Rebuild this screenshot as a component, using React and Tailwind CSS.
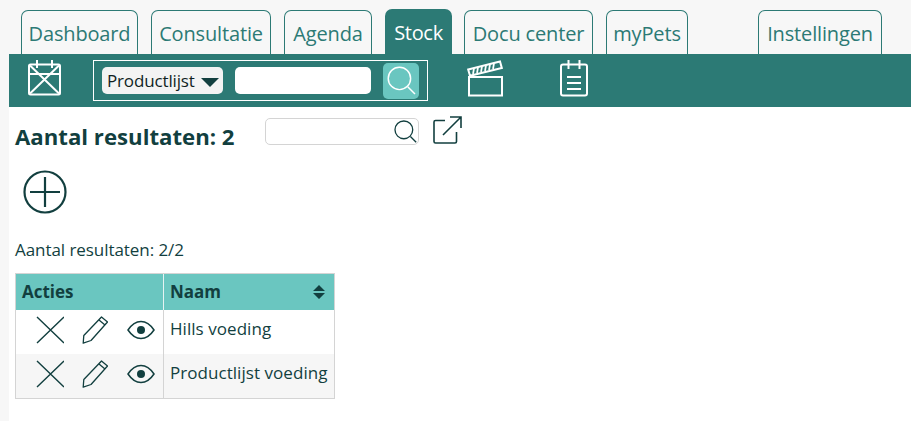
const FONT = "font-['Open_Sans','Noto_Sans',sans-serif]";

function Tab({ label, w, active, ml = "ml-[13px]" }) {
  if (active) {
    return (
      <div className={`${ml} ${w} h-[45px] rounded-t-[7px] bg-[#2c7a75] text-white text-[20px] tracking-[-0.3px] font-medium flex items-center justify-center pt-[3px]`}>
        {label}
      </div>
    );
  }
  return (
    <div className={`${ml} ${w} h-[44px] rounded-t-[7px] border border-b-0 border-[#2c7a75] text-[#2c7a75] text-[20px] tracking-[-0.15px] flex items-center justify-center pt-[2px]`}>
      {label}
    </div>
  );
}

const W = "#ffffff";
const D = "#123f3f";

function CalIcon() {
  return (
    <svg width="34" height="37" viewBox="0 0 34 37" fill="none" stroke={W} strokeWidth="2">
      <rect x="1" y="4.5" width="31" height="30" rx="1.5" />
      <path d="M9 0v8M24 0v8M1 14h31M2 5.5l29 28M31 5.5l-29 28" />
    </svg>
  );
}
function ClapIcon() {
  return (
    <svg width="36" height="37" viewBox="0 0 36 37" fill="none" stroke={W} strokeWidth="2">
      <rect x="2" y="17" width="33" height="18.5" />
      <path d="M1.2 9.5 33 1.5l1.8 6.5L3 15.8z" />
      <path d="M7 8.5l-1 5.5M11 7.5l-1 5.5M15 6.5l-1 5.5M19 5.5l-1 5.5M23 4.5l-1 5.5M27 3.5l-1 5.5" strokeWidth="1.7" />
    </svg>
  );
}
function NoteIcon() {
  return (
    <svg width="28" height="37" viewBox="0 0 28 37" fill="none" stroke={W} strokeWidth="2">
      <rect x="1" y="4.5" width="26" height="31" rx="2" />
      <path d="M8.5 0v9M19.5 0v9M7 17h14M7 23h14M7 29h14" />
    </svg>
  );
}
function Search({ color, size, sw = 1.5 }) {
  return (
    <svg width={size} height={size} viewBox="0 0 28 28" fill="none" stroke={color} strokeWidth={sw}>
      <circle cx="12" cy="12" r="10.8" />
      <path d="M20 20l7 7" />
    </svg>
  );
}
function Xicon() {
  return (
    <svg width="28" height="28" viewBox="0 0 28 28" fill="none" stroke={D} strokeWidth="1.4">
      <path d="M1 1l27 26M28 1L1 27" />
    </svg>
  );
}
function Pencil() {
  return (
    <svg width="26" height="28" viewBox="0 0 26 28" fill="none" stroke={D} strokeWidth="1.3" strokeLinejoin="round">
      <path d="M19.500 1 25.500 6 9 24.500 1.200 27.200 1.800 19.500z" />
      <path d="M17 4l6 5" />
    </svg>
  );
}
function Eye() {
  return (
    <svg width="28" height="20" viewBox="0 0 28 20" fill="none" stroke={D} strokeWidth="1.5">
      <path d="M1 10C5 4 9 1.5 14 1.5S23 4 27 10c-4 6-8 8.500-13 8.500S5 16 1 10z" />
      <circle cx="14" cy="10" r="4" fill={D} stroke="none" />
    </svg>
  );
}

function Actions() {
  return (
    <div className="flex items-center pl-[20px]">
      <Xicon />
      <span className="ml-[18px] flex"><Pencil /></span>
      <span className="ml-[19px] flex"><Eye /></span>
    </div>
  );
}

export default function App() {
  return (
    <div className={`${FONT} w-[911px] h-[421px] overflow-hidden bg-[#f7f7f7] pl-[9px]`}>
      <div className="h-[54px] flex items-end pl-[12px]">
        <Tab label="Dashboard" w="w-[117px]" ml="ml-0" />
        <Tab label="Consultatie" w="w-[120px]" />
        <Tab label="Agenda" w="w-[88px]" />
        <Tab label="Stock" w="w-[67px]" active />
        <Tab label="Docu center" w="w-[129px]" ml="ml-[12px]" />
        <Tab label="myPets" w="w-[82px]" />
        <Tab label="Instellingen" w="w-[124px]" ml="ml-[70px]" />
      </div>

      <div className="h-[53px] bg-[#2c7a75] flex items-start pl-[19px] pt-[6px]">
        <CalIcon />
        <div className="ml-[31px] w-[335px] h-[41px] border border-white flex items-center pl-[8px]">
          <div className="w-[121px] h-[27px] bg-[#f3f3f3] rounded-[5px] flex items-center pl-[5px] text-[#101f1f] text-[17px] tracking-[-0.15px] whitespace-nowrap">
            Productlijst
            <svg className="ml-[6px] mt-[4px] shrink-0" width="18" height="9" viewBox="0 0 18 9"><path d="M0 0h18L9 9z" fill={D} /></svg>
          </div>
          <div className="ml-[12px] w-[136px] h-[27px] bg-white rounded-[5px]" />
          <div className="ml-[12px] w-[36px] h-[36px] bg-[#6ac6c0] rounded-[5px] flex items-center justify-center pl-[1px]">
            <Search color={W} size={29} sw={1.4} />
          </div>
        </div>
        <div className="ml-[39px] flex"><ClapIcon /></div>
        <div className="ml-[57px] flex"><NoteIcon /></div>
      </div>

      <div className="h-[314px] bg-white pl-[6px] text-[#123f3f]">
        <div className="flex items-start h-[63px]">
          <div className="mt-[16px] text-[22.2px] font-bold leading-[28px] w-[250px] whitespace-nowrap">Aantal resultaten: 2</div>
          <div className="mt-[11px] w-[154px] h-[27px] border border-[#d4d4d4] rounded-[5px] flex items-center justify-end pr-[1px]">
            <Search color={D} size={23} sw={1.6} />
          </div>
          <svg className="ml-[14px] mt-[9px]" width="29" height="28" viewBox="0 0 29 28" fill="none" stroke={D} strokeWidth="1.6">
            <path d="M12 4.500H2.500a1.500 1.500 0 0 0-1.500 1.500v19.500a1.500 1.500 0 0 0 1.500 1.500H22a1.500 1.500 0 0 0 1.500-1.500V16" />
            <path d="M10 19 27.500 1.500M17 1h11v11" />
          </svg>
        </div>
        <div className="pl-[8px] flex">
          <svg width="44" height="44" viewBox="0 0 44 44" fill="none" stroke={D} strokeWidth="2.2">
            <circle cx="22" cy="22" r="20.5" />
            <path d="M22 7v30M7 22h30" />
          </svg>
        </div>
        <div className="mt-[25px] text-[17px] tracking-[-0.06px] leading-[22px] text-[#123f3f]">Aantal resultaten: 2/2</div>
        <div className="mt-[12px] w-[320px] border border-[#d4d4d4] text-[17px]">
          <div className="flex h-[36px] bg-[#6ac6c0] font-bold">
            <div className="w-[148px] border-r border-[#e6f3f2] pl-[6px] flex items-center">Acties</div>
            <div className="flex-1 pl-[6px] pr-[9px] flex items-center justify-between">
              Naam
              <svg width="12" height="14" viewBox="0 0 12 14" fill={D}><path d="M6 0l6 6H0zM0 8h12l-6 6z" /></svg>
            </div>
          </div>
          <div className="flex h-[44px] bg-white">
            <div className="w-[148px] border-r border-[#d4d4d4] pt-[6px]"><Actions /></div>
            <div className="flex-1 pl-[6px] pt-[7px] leading-[24px] tracking-[0.05px]">Hills voeding</div>
          </div>
          <div className="flex h-[44px] bg-[#f6f6f6]">
            <div className="w-[148px] border-r border-[#d4d4d4] pt-[6px]"><Actions /></div>
            <div className="flex-1 pl-[6px] pt-[7px] leading-[24px] tracking-[0.05px] whitespace-nowrap">Productlijst voeding</div>
          </div>
        </div>
      </div>
    </div>
  );
}
